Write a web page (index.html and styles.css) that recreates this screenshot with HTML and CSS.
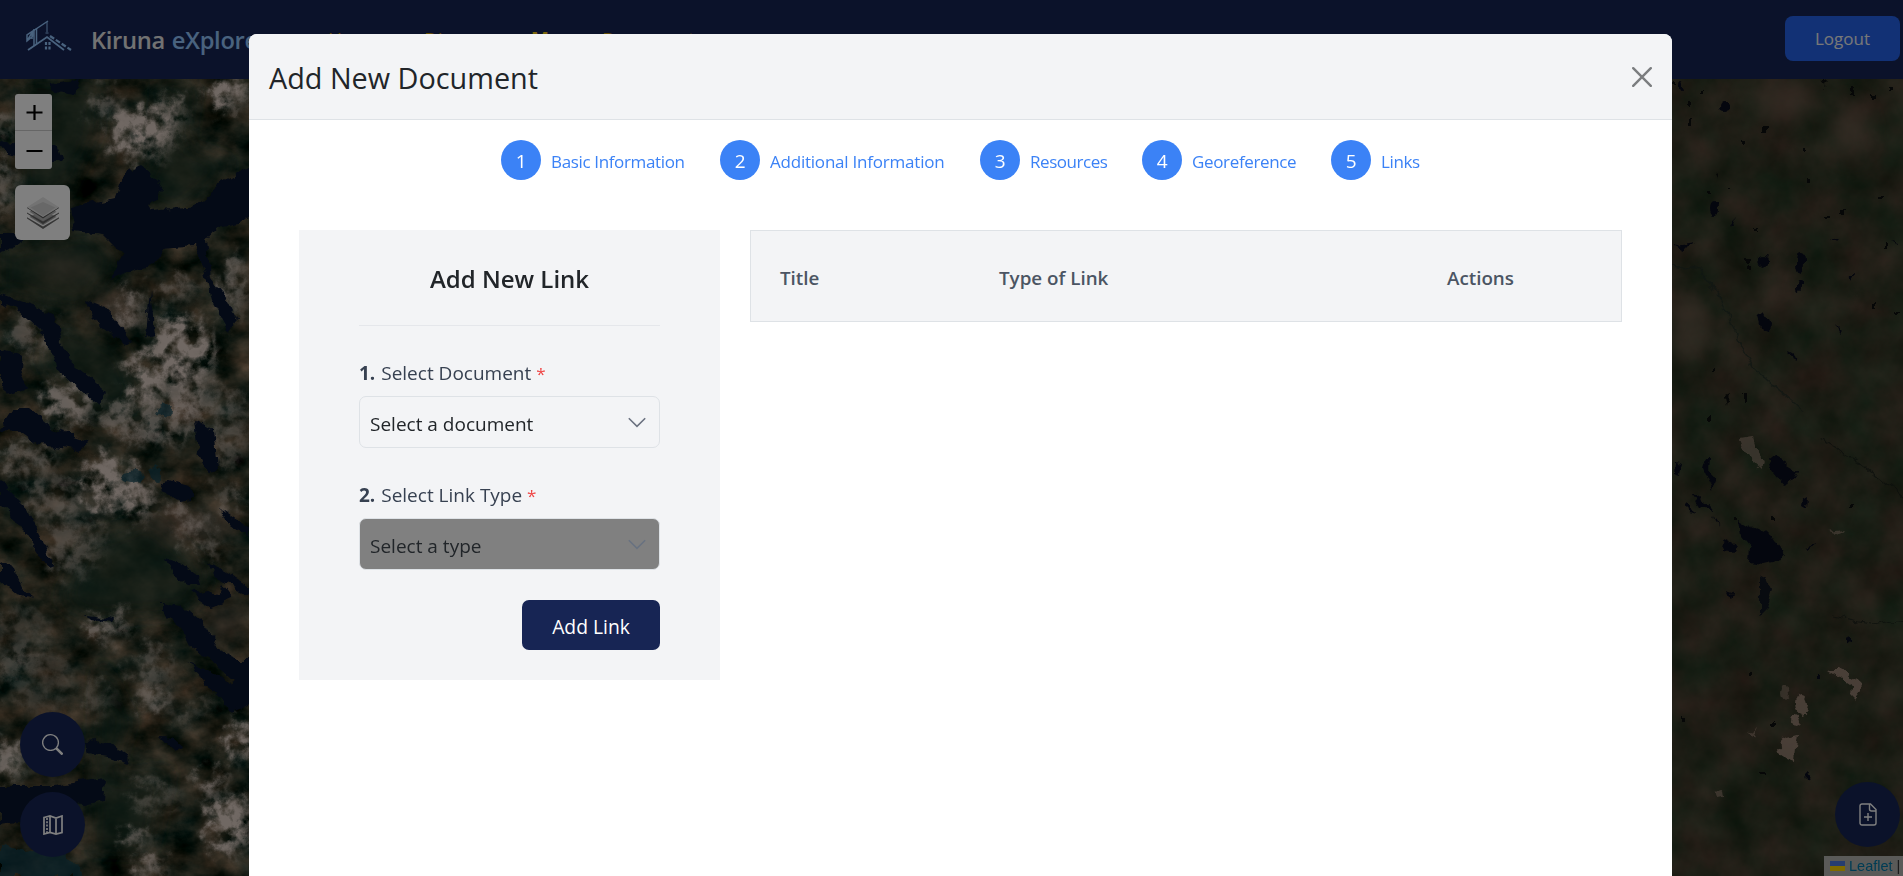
FILE: index.html
```html
<!DOCTYPE html>
<html lang="en">
<head>
<meta charset="utf-8">
<title>Kiruna eXplorer</title>
<link rel="stylesheet" href="styles.css">
</head>
<body>
<div class="app">
  <header class="navbar">
    <svg class="logo" width="46" height="32" viewBox="0 0 46 32" fill="none" stroke="#93c5fd">
      <path d="M2 30 21 17 38 30" stroke-width="1.800"/>
      <path d="M8 26V9M10.500 24V8" stroke-width="1.500"/>
      <path d="M1 15 22 1M6 11v8M1 15v6l6-5v-5zM1 21l6-10" stroke-width="1.500"/>
      <path d="M21 2v10M19.500 13h3" stroke-width="1"/>
      <path d="M24 16 45 30" stroke-width="2.200" stroke-dasharray="5 2"/>
      <path d="M20 22v8M23.500 22v8" stroke-width="2.200" stroke-dasharray="3 1.500"/>
    </svg>
    <div class="brand"><span>Kiruna</span> <span class="brand-accent">eXplorer</span></div>
    <nav class="nav-links"><a class="home">Home</a><a class="diagram">Diagram</a><a class="map-link">Map</a><a>Documents</a></nav>
    <button class="logout">Logout</button>
  </header>
  <main class="map">
    <svg class="terrain" viewBox="0 79 1903 797" preserveAspectRatio="none">
      <defs>
        <filter id="ground" x="0" y="0" width="100%" height="100%" color-interpolation-filters="sRGB">
          <feTurbulence type="fractalNoise" baseFrequency=".03 .04" numOctaves="5" seed="8"/>
          <feColorMatrix values=".8 .25 0 0 -.32  .5 .3 0 0 -.18  .4 .3 0 0 -.19  0 0 0 0 1"/>
        </filter>
        <filter id="plain" x="0" y="0" width="100%" height="100%" color-interpolation-filters="sRGB">
          <feTurbulence type="fractalNoise" baseFrequency=".025" numOctaves="6" seed="21"/>
          <feColorMatrix values=".26 .14 0 0 .02  .06 .16 0 0 .115  .1 .14 0 0 .04  0 0 0 0 1"/>
        </filter>
        <filter id="snow" x="-10%" y="-10%" width="120%" height="120%" color-interpolation-filters="sRGB">
          <feGaussianBlur in="SourceGraphic" stdDeviation="6" result="soft"/>
          <feTurbulence type="fractalNoise" baseFrequency=".07" numOctaves="5" seed="4" result="noise"/>
          <feDisplacementMap in="soft" in2="noise" scale="40" xChannelSelector="R" yChannelSelector="G" result="torn"/>
          <feColorMatrix in="noise" values="0 0 0 0 1  0 0 0 0 1  0 0 0 0 1  2.600 1.400 0 0 -1.300" result="grain"/>
          <feComposite in="torn" in2="grain" operator="in"/>
        </filter>
        <filter id="shore" x="-10%" y="-10%" width="120%" height="120%" color-interpolation-filters="sRGB">
          <feTurbulence type="fractalNoise" baseFrequency=".08" numOctaves="3" seed="2"/>
          <feDisplacementMap in="SourceGraphic" scale="11" xChannelSelector="R" yChannelSelector="G"/>
          <feGaussianBlur stdDeviation=".5"/>
        </filter>
        <filter id="haze"><feGaussianBlur stdDeviation="9"/></filter>
      </defs>
      <rect x="0" y="79" width="260" height="797" filter="url(#ground)"/>
      <rect x="1660" y="79" width="243" height="797" filter="url(#plain)"/>
      <g fill="#20382a" opacity=".7" filter="url(#haze)">
        <path d="M25 85h75l-5 50-30 60H20zM160 80l35 5-10 60 50 20-60 50-40-20 20-40zM0 250l90-20 30 30-40 50-80-20zM60 320l60 30 20 50-40 20-60-60zM90 540l60-20 60 50-20 40-100 10-30-20zM100 660l30 60-20 60 60-10-20 80H90z"/>
      </g>
      <g fill="#7d6556" opacity=".5" filter="url(#haze)">
        <ellipse cx="65" cy="268" rx="26" ry="12"/><ellipse cx="115" cy="308" rx="26" ry="18"/><ellipse cx="225" cy="622" rx="20" ry="20"/><ellipse cx="190" cy="525" rx="50" ry="15"/><ellipse cx="1690" cy="325" rx="22" ry="30"/><ellipse cx="1780" cy="100" rx="35" ry="20"/><ellipse cx="1850" cy="130" rx="18" ry="28"/>
      </g>
      <g fill="#e0d0c6" filter="url(#snow)">
        <ellipse cx="108" cy="108" rx="14" ry="20" opacity=".55"/><ellipse cx="145" cy="132" rx="34" ry="25"/><ellipse cx="175" cy="112" rx="12" ry="14" opacity=".8"/>
        <ellipse cx="230" cy="92" rx="22" ry="17"/><ellipse cx="5" cy="122" rx="10" ry="14" opacity=".6"/><ellipse cx="5" cy="188" rx="12" ry="28" opacity=".6"/>
        <ellipse cx="133" cy="310" rx="12" ry="20" opacity=".8"/><ellipse cx="180" cy="290" rx="22" ry="10" opacity=".6"/><ellipse cx="234" cy="290" rx="15" ry="30" opacity=".7"/>
        <ellipse cx="186" cy="352" rx="32" ry="36"/><ellipse cx="150" cy="378" rx="22" ry="24"/><ellipse cx="155" cy="420" rx="48" ry="26" opacity=".7"/><ellipse cx="195" cy="395" rx="22" ry="26" opacity=".7"/>
        <ellipse cx="35" cy="335" rx="26" ry="20" opacity=".55"/><ellipse cx="70" cy="405" rx="28" ry="22" opacity=".9"/><ellipse cx="30" cy="460" rx="28" ry="20" opacity=".6"/><ellipse cx="110" cy="485" rx="27" ry="28"/>
        <ellipse cx="140" cy="500" rx="16" ry="20"/><ellipse cx="55" cy="500" rx="28" ry="23" opacity=".5"/><ellipse cx="75" cy="545" rx="28" ry="32" opacity=".5"/><ellipse cx="230" cy="430" rx="22" ry="38" opacity=".5"/>
        <path d="M165 500l35 15 25 40-10 5-40-35zM205 480l40 20v20z" opacity=".7"/><ellipse cx="108" cy="628" rx="24" ry="13" opacity=".8"/>
        <ellipse cx="20" cy="640" rx="34" ry="35" opacity=".3"/><ellipse cx="40" cy="680" rx="40" ry="32" opacity=".3"/><ellipse cx="155" cy="668" rx="20" ry="24" opacity=".5"/><ellipse cx="160" cy="702" rx="18" ry="14" opacity=".7"/>
        <ellipse cx="100" cy="700" rx="15" ry="15" opacity=".4"/><ellipse cx="242" cy="742" rx="18" ry="18"/><ellipse cx="10" cy="763" rx="16" ry="20" opacity=".9"/><ellipse cx="212" cy="784" rx="15" ry="10"/><ellipse cx="232" cy="825" rx="24" ry="30"/>
        <ellipse cx="155" cy="798" rx="24" ry="16" opacity=".45"/><ellipse cx="135" cy="838" rx="18" ry="7" opacity=".9"/><ellipse cx="150" cy="868" rx="18" ry="12" opacity=".8"/><path d="M175 720l40-22v8l-35 24z" opacity=".6"/>
      </g>
      <g fill="#09142d" filter="url(#shore)">
        <path d="M70 208 115 198l8-22 17-10 15 12 9 12-16 15 4 6 43-5 30-26 28-16v48l-14 12-22 4-11 14 4 36 16 20 12 24-8 10-18-32-10-38-8-16-30 3-10 14-20 7-23 8 13-23-20-20-30-3z"/>
        <path d="M50 83 80 80l-3 15-22-3zM0 140l16 4 40 1 6 16-22 3-30-8zM0 232h22l-4 14-18 7zM0 294l32 11 24 11 3 20 11 25 38 32-9 12-39-33-19-40-26-24-15-6zM0 350l22 6-1 12 6 20-20 8-7-12zM86 300l20 8 28 34-8 4-35-28zM150 290l5 45-9 2z"/>
        <path d="M0 430l15-22 15 0 24 22 35 12-13 8-36-5-18-14zM195 420l18 10 4 38-8 6-10-22zM160 482l10-2 20 6 7 12-16 3-18-7zM165 558l18 6 15 11 2 10-12-1-16-9zM205 564l14 5 30 17v8l-26-12zM190 594l18-4 12 3 3-7 10 12-24 10zM0 562l14 8 8 18 12 11-18-4-16-14zM222 510l27 18v9l-20-14z"/>
        <path d="M162 602l20 4 22 18 20 30 14 6 12 0v45l-20 7-12-17-14-10-9-18-8-4 18 5 24 16 3-6-20-18-22-12-10-20-18-18z"/>
        <path d="M83 741 97 740 110 744l16 8 4 12-18-5-24-4zM160 736l12 1 9 8-7 5zM0 786h54l30-5 21-3-2 22-18 5-34-4-34 22-17 2zM85 615l30 4-2 3-24-3zM0 480l25 25 30 60-8 2-33-50-14-13z"/>
      </g>
      <g fill="#124454" opacity=".7" filter="url(#shore)"><path d="M0 845l25 6 35-4 26 29H0z"/><ellipse cx="165" cy="411" rx="8" ry="6"/><ellipse cx="133" cy="476" rx="10" ry="5"/><ellipse cx="155" cy="473" rx="5" ry="7"/></g>
      <g fill="#090c1c" filter="url(#shore)">
        <ellipse cx="1724" cy="107" rx="5" ry="5"/><ellipse cx="1681" cy="86" rx="2" ry="5"/><ellipse cx="1714" cy="209" rx="4" ry="7"/><ellipse cx="1763" cy="261" rx="4" ry="6"/><ellipse cx="1801" cy="263" rx="5" ry="11"/><ellipse cx="1799" cy="286" rx="2" ry="4"/>
        <path d="M1674 245l20-3-12 7zM1757 315l8-3 5 10-1 12-7-3zM1786 350l4 2 4 10-4-2zM1730 224l6-7-3 8zM1830 239l12 2-2 2zM1892 240l8 3v2zM1835 325l6 6-2 2zM1850 276l6 0-3 5z"/>
        <path d="M1768 456l10 2 21 12-3 10-13 5-10-12zM1705 458l5 0-1 12 6 12-3 8-6-12-4-10zM1675 462l8 2-2 12-7-2zM1690 492l16 10 8 10-12-4zM1687 504l12 8-10-2zM1712 514l8 12-6-6zM1738 519l14 8 18 8 13 18-6 8-14 3-14-2 1-16-10-12zM1720 544l6-5 11 6-2 8-10-2zM1804 498l5-3-1 12-5-3z"/>
        <path d="M1760 577l6-3 6 14-6 22-6 6z" fill="#101620"/><path d="M1727 590l6 2-2 8zM1844 638l6-2 0 9-6-1zM1817 675h3v8h-3zM1804 546l10-3-5 4zM1804 774l6 3-4 3z"/>
      </g>
      <g fill="#0c0e0e" filter="url(#shore)">
        <path d="M1700 90h3v5h-3zM1822 83l5-2-2 6zM1764 126h3v7h-3zM1743 140h3v6h-3zM1802 148h3v4h-3zM1717 176l3-1-1 5zM1706 190h4v3h-4zM1808 180h4v3h-4zM1826 217h5v3h-5zM1840 209h4v4h-4zM1755 226h4v3h-4zM1745 260h5v4h-5zM1748 266h4v3h-4zM1729 188h3v3h-3zM1879 195h3v4h-3zM1896 312h4v3h-4zM1883 243h3v5h-3zM1873 304h4v3h-4zM1710 366h3v4h-3zM1743 394h3v8h-3zM1725 398l4-2-2 10zM1708 417h3v5h-3zM1732 514h4v4h-4zM1770 516h4v3h-4zM1849 503h5v3h-5zM1748 673h5v4h-5zM1681 717h4v3h-4zM1761 771h5v3h-5zM1770 722h6v3h-6zM1850 85h3v7h-3zM1872 94h4v5h-4zM1890 88h4v5h-4zM1690 100h3v5h-3zM1673 80h3v4h-3zM1688 121h3v5h-3z"/>
        <path d="M1674 266l26 4 22 30 14 34 18 35 50 42" fill="none" stroke="#202c26" stroke-width="1.500" opacity=".7"/><path d="M1820 438l40 25 43 34M1830 616l48 8 25-5" fill="none" stroke="#161c18" stroke-width="1.200" opacity=".7"/>
      </g>
      <g fill="#a88f80" filter="url(#shore)" opacity=".8">
        <path d="M1740 438l12-2 5 16 7 10-2 8-9-8-8-10z" opacity=".7"/><path d="M1828 670l12 0 20 12 1 8-6 8-3-3 1-9-12-8z"/><ellipse cx="1801" cy="704" rx="6" ry="10"/><ellipse cx="1796" cy="721" rx="5" ry="6"/><ellipse cx="1785" cy="693" rx="5" ry="7" opacity=".6"/><path d="M1776 750l10-12 12-3-2 14-1 11-8-3z"/><path d="M1830 532l12-2-4 5zM1716 792l6-2 1 7-5 1zM1750 732l8-6-4 10z" opacity=".7"/>
      </g>
    </svg>
    <div class="map-left">
      <div class="zoom-control">
        <button><svg width="17" height="17" viewBox="0 0 17 17" stroke="#000" stroke-width="2.200"><path d="M8.500 1v15M.5 8.500h16"/></svg></button>
        <button><svg width="17" height="17" viewBox="0 0 17 17" stroke="#000" stroke-width="2"><path d="M.5 9h16"/></svg></button>
      </div>
      <div class="layers">
        <svg width="32" height="32" viewBox="0 0 26 26"><path d="M0 17.500 13 26l13-8.500v-1L13 24 0 16.500z" fill="#6a6a6a"/><path d="M2 16l11 7 11-7-11-5z" fill="#a8a8a8"/><path d="M0 13.500 13 22l13-8.500v-1L13 20 0 12.500z" fill="#606060"/><path d="M2 12l11 7 11-7-11-6z" fill="#b4b4b4"/><path d="M0 9l13 8.500L26 9v-.8L13 16 0 8.200z" fill="#5a5a5a"/><path d="M0 8.300 13 0l13 8.300L13 16.300z" fill="#e6e6e6"/><path d="M3 8.500 13 4l10 4.500-10 7z" fill="#d0d0d0"/></svg>
      </div>
      <div class="round-buttons">
        <button class="round"><svg width="21" height="21" viewBox="0 0 16 16" fill="#fff"><path d="M11.742 10.344a6.500 6.500 0 1 0-1.397 1.398h-.001q.044.060.098.115l3.850 3.850a1 1 0 0 0 1.415-1.414l-3.850-3.850a1 1 0 0 0-.115-.1zM12 6.500a5.500 5.500 0 1 1-11 0 5.500 5.500 0 0 1 11 0"/></svg></button>
        <button class="round"><svg width="20" height="20" viewBox="0 0 20 20" fill="none" stroke="#fff" stroke-width="1.700"><path d="M1 2.500 7 1l6 2 6-2v16.500L13 19l-6-1.500L1 19zM7 1v16.500M13 3v16"/><path d="M4 3v15" stroke-dasharray="2 1.300"/></svg></button>
      </div>
    </div>
    <div class="map-right">
      <button class="round"><svg width="18" height="23" viewBox="0 0 18 23" fill="none" stroke="#fff" stroke-width="1.400"><path d="M3 1h8.500L17 6.500V20a2 2 0 0 1-2 2H3a2 2 0 0 1-2-2V3a2 2 0 0 1 2-2zM10.500 1v5a2 2 0 0 0 2 2H17M9 10v8M5 14h8"/></svg></button>
      <div class="attribution"><svg width="15" height="10" viewBox="0 0 15 10"><path fill="#4c7be1" d="M0 0h15v5H0z"/><path fill="#ffd500" d="M0 5h15v5H0z"/></svg><a>Leaflet</a><span>|</span></div>
    </div>
  </main>
</div>
<div class="backdrop">
  <section class="modal">
    <header class="modal-header"><h2>Add New Document</h2>
      <svg class="close" width="20" height="20" viewBox="0 0 20 20" stroke="#7b7d7f" stroke-width="2.400" stroke-linecap="round"><path d="M1.200 1.200l17.600 17.600M18.800 1.200 1.200 18.800"/></svg>
    </header>
    <ol class="steps">
      <li><b>1</b><span class="basic">Basic Information</span></li>
      <li><b>2</b><span class="additional">Additional Information</span></li>
      <li><b>3</b><span class="resources">Resources</span></li>
      <li><b>4</b><span class="georef">Georeference</span></li>
      <li><b>5</b><span class="links">Links</span></li>
    </ol>
    <div class="content">
      <form class="link-form">
        <h3>Add New Link</h3>
        <hr>
        <label><strong>1.</strong> Select Document <em>*</em></label>
        <div class="select"><span>Select a document</span><svg width="18" height="11" viewBox="0 0 18 11" fill="none" stroke="#6b7280" stroke-width="1.600"><path d="M.8 1.200 9 9.300l8.200-8.100"/></svg></div>
        <label><strong>2.</strong> Select Link Type <em>*</em></label>
        <div class="select disabled"><span>Select a type</span><svg width="18" height="11" viewBox="0 0 18 11" fill="none" stroke="#687280" stroke-width="1.600"><path d="M.8 1.200 9 9.300l8.200-8.100"/></svg></div>
        <button type="button" class="add-link">Add Link</button>
      </form>
      <div class="link-table"><span>Title</span><span>Type of Link</span><span>Actions</span></div>
    </div>
  </section>
</div>
</body>
</html>
```
FILE: styles.css
```css
* { box-sizing: border-box; }
body { margin: 0; height: 876px; overflow: hidden; font-family: "Open Sans", "Noto Sans", sans-serif; font-size: 19px; color: #212529; }
button { font: inherit; border: 0; padding: 0; }
h2, h3, ol { margin: 0; padding: 0; }
svg { display: block; flex: none; }

.app { height: 876px; display: flex; flex-direction: column; }
.navbar { height: 79px; flex: none; background: #172554; display: flex; align-items: center; padding: 0 3px 0 26px; white-space: nowrap; }
.logo { margin-top: -8px; }
.brand { margin-left: 19px; width: 220px; font-size: 23.7px; font-weight: 600; color: #e5e5e5; letter-spacing: -.3px; }
.brand-accent { color: #93c5fd; margin-left: 1px; }
.nav-links { display: flex; flex: 1; margin: -2px 0 0 17px; color: #ca9a0a; font-size: 19px; }
.home { width: 96px; }
.diagram { width: 107px; }
.map-link { width: 71px; font-weight: 700; color: #facc15; }
.logout { width: 115px; height: 45px; margin-top: -2px; border-radius: 8px; background: #2563eb; color: #f0f0f0; font-size: 17px; }

.map { flex: 1; display: flex; justify-content: space-between; position: relative; background: #38402f; }
.terrain { position: absolute; inset: 0; width: 100%; height: 100%; }
.map-left, .map-right { position: relative; display: flex; flex-direction: column; }
.map-left { padding: 15px 0 19px 15px; }
.zoom-control { width: 37px; border-radius: 3px; overflow: hidden; }
.zoom-control button { display: grid; place-items: center; width: 37px; height: 37px; padding-left: 2px; background: #fff; }
.zoom-control button:first-child { border-bottom: 1px solid #ccc; }
.zoom-control button:last-child { height: 38px; }
.layers { width: 55px; height: 55px; margin-top: 16px; border-radius: 6px; background: #fff; display: grid; place-items: center; }
.round-buttons { margin: auto 0 0 5px; display: grid; gap: 15px; }
.round { width: 65px; height: 65px; border-radius: 50%; background: #172554; display: grid; place-items: center; }
.map-right { justify-content: flex-end; align-items: flex-end; }
.map-right .round { margin: 0 3px 9px 0; }
.attribution { width: 79px; height: 20px; padding-left: 6px; display: flex; align-items: center; gap: 4px; background: #b4b5b1; font: 14.5px "Liberation Sans", sans-serif; color: #333; }
.attribution a { color: #0078a8; }

.backdrop { position: absolute; inset: 0; background: rgba(0, 0, 0, .5); padding: 34px 0 0 249px; overflow: hidden; }
.modal { width: 1423px; height: 900px; background: #fff; border-radius: 8px 8px 0 0; overflow: hidden; }
.modal-header { height: 86px; padding: 0 20px; display: flex; align-items: center; justify-content: space-between; background: #f3f4f6; border-bottom: 1px solid #dee2e6; }
.modal-header h2 { font-size: 28.8px; font-weight: 400; padding-top: 1px; }
.steps { list-style: none; display: flex; gap: 35px; padding: 20px 0 0 252px; }
.steps li { display: flex; align-items: center; gap: 10px; color: #3b82f6; font-size: 17px; letter-spacing: -.35px; white-space: nowrap; }
.steps b { width: 40px; height: 40px; border-radius: 50%; background: #3b82f6; color: #fff; font-size: 19px; font-weight: 400; line-height: 42px; text-align: center; }
.steps span { padding-top: 2px; }
.basic { width: 134px; }
.steps .additional { width: 175px; letter-spacing: -.22px; }
.steps .resources { width: 77px; letter-spacing: -.45px; }
.georef { width: 104px; }

.content { display: flex; align-items: flex-start; gap: 30px; padding: 50px 50px 0 50px; }
.link-form { width: 421px; height: 450px; flex: none; padding: 30px 60px 0; background: #f3f4f6; display: flex; flex-direction: column; }
.link-form h3 { font-size: 24px; font-weight: 600; line-height: 38px; text-align: center; }
.link-form hr { width: 100%; height: 1px; flex: none; margin: 27px 0 34px; border: 0; background: #e5e7eb; }
.link-form label { height: 28px; line-height: 26px; margin-bottom: 8px; color: #374151; }
.link-form em { color: #ef4444; font-style: normal; font-size: 17px; line-height: 1; }
.link-form strong { margin-right: 1px; }
.select { height: 52px; flex: none; margin-bottom: 34px; padding: 0 13px 0 10px; border: 1px solid #dee2e6; border-radius: 7px; display: flex; align-items: center; justify-content: space-between; }
.select span { padding-top: 3px; }
.disabled { background: #808080; margin-bottom: 30px; }
.add-link { width: 138px; height: 50px; flex: none; align-self: flex-end; padding-top: 3px; border-radius: 7px; background: #172554; color: #fff; font-size: 19.3px; }
.link-table { flex: 1; height: 92px; padding: 3px 0 0 29px; display: grid; grid-template-columns: 219px 448px 1fr; align-items: center; background: #f3f4f6; border: 1px solid #dee2e6; color: #4b5563; font-weight: 600; font-size: 18.800px; }
```
